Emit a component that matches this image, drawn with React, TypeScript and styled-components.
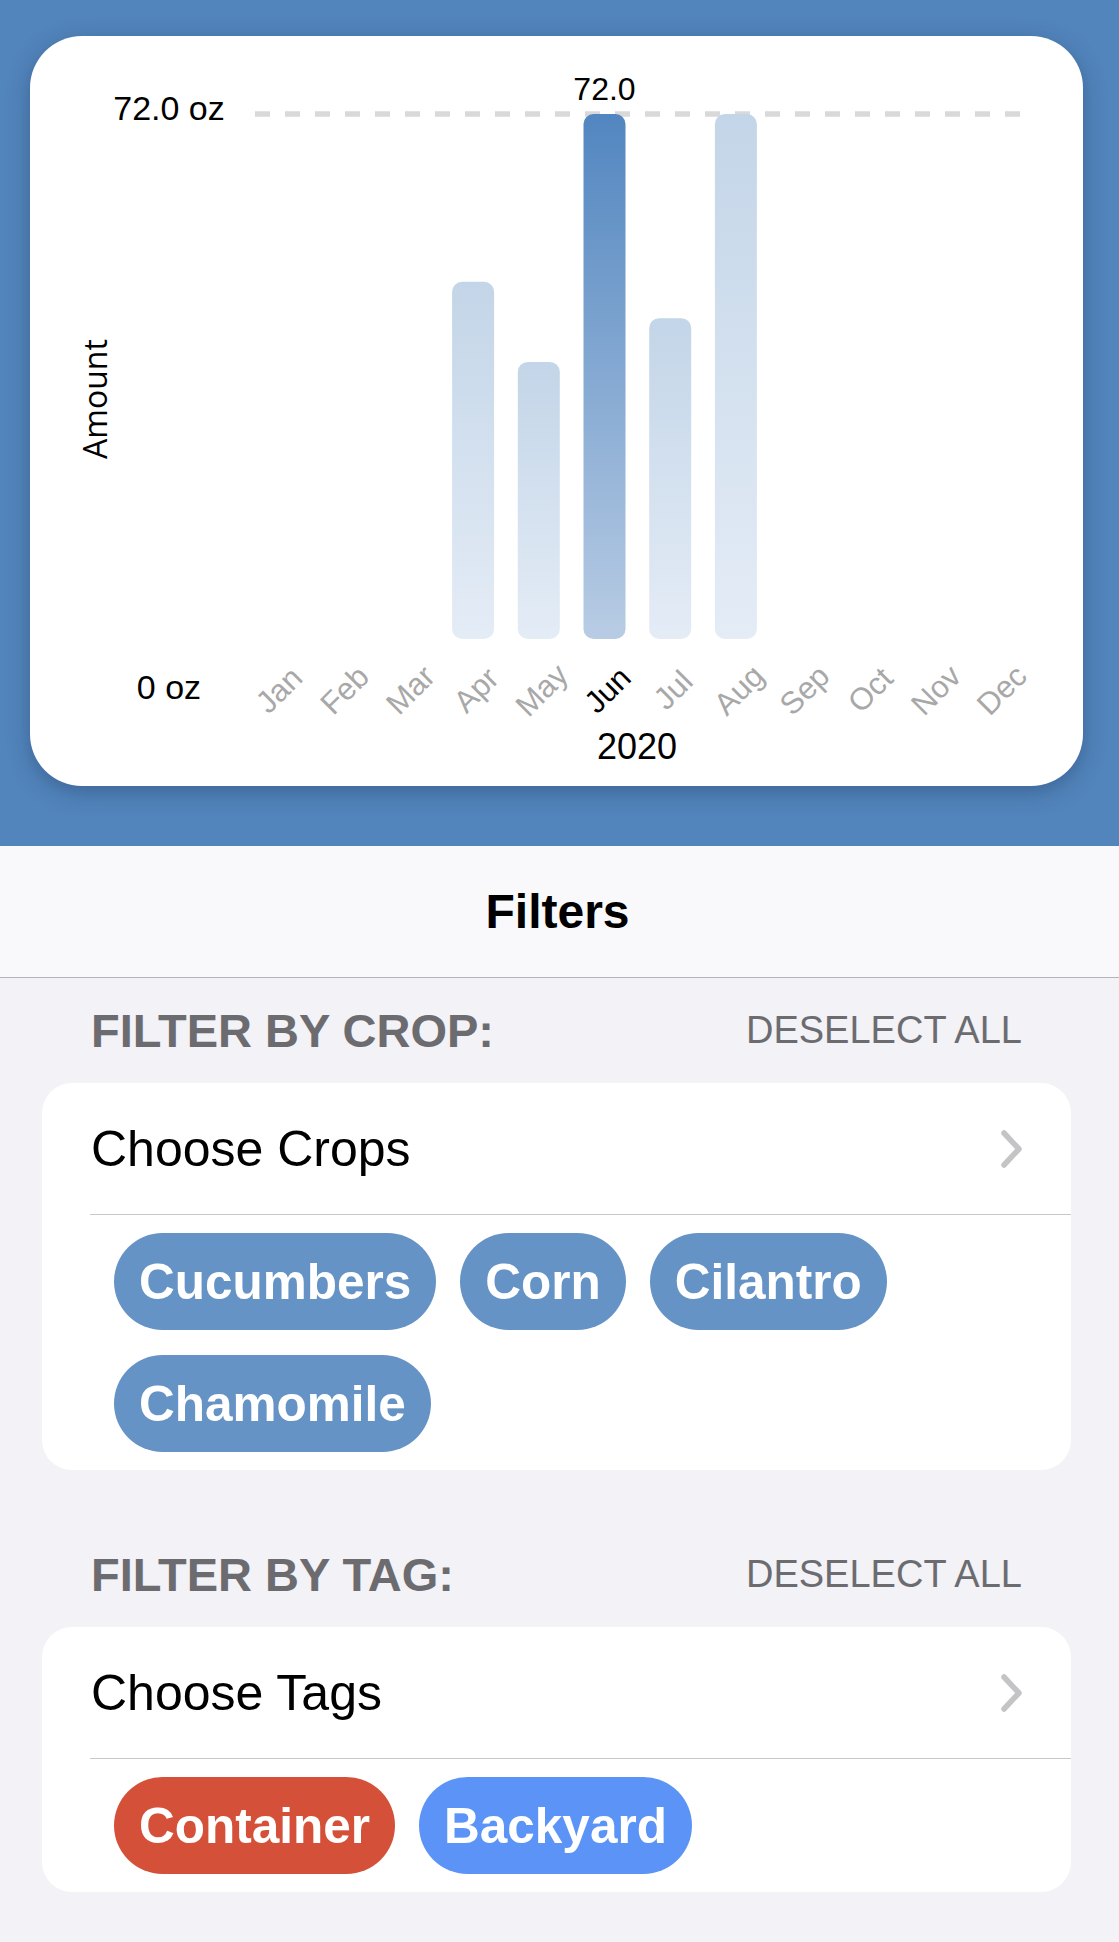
import React from "react";
import styled, { createGlobalStyle } from "styled-components";

const GlobalStyle = createGlobalStyle`
  html, body {
    margin: 0;
    padding: 0;
    background: #f2f2f7;
  }
  body {
    font-family: "Liberation Sans", Arial, sans-serif;
    -webkit-font-smoothing: antialiased;
  }
`;

const Page = styled.div`
  width: 1119px;
  min-height: 1942px;
  display: flex;
  flex-direction: column;
  background: #f2f2f7;
`;

const ChartBand = styled.section`
  background: #5285bc;
  padding: 36px 36px 60px 30px;
`;

const ChartCard = styled.div`
  width: 1053px;
  height: 750px;
  background: #ffffff;
  border-radius: 52px;
  box-shadow: 0 6px 22px rgba(20, 40, 80, 0.35);
  overflow: hidden;
`;

const ChartSvg = styled.svg`
  display: block;
  font-family: "Liberation Sans", Arial, sans-serif;
`;

const SheetHeader = styled.header`
  height: 131px;
  background: #f9f9fb;
  border-bottom: 1px solid #b5b5b8;
  display: flex;
  align-items: center;
  justify-content: center;
`;

const SheetTitle = styled.h1`
  margin: 0 4px 0 0;
  font-size: 48px;
  font-weight: 700;
  color: #000;
`;

const Sections = styled.div`
  display: flex;
  flex-direction: column;
  gap: 52px;
  padding: 0 48px 0 42px;
`;

const Section = styled.section`
  display: flex;
  flex-direction: column;
`;

const SectionHeader = styled.div`
  height: 105px;
  display: flex;
  align-items: center;
  justify-content: space-between;
  padding: 0 49px 0 49px;
`;

const SectionTitle = styled.h2`
  margin: 0;
  font-size: 47px;
  font-weight: 700;
  color: #6c6c70;
  text-transform: uppercase;
`;

const DeselectButton = styled.button`
  border: none;
  background: none;
  padding: 0;
  font-family: inherit;
  font-size: 38px;
  font-weight: 400;
  color: #6c6c70;
  text-transform: uppercase;
`;

const Card = styled.div`
  background: #ffffff;
  border-radius: 30px;
  overflow: hidden;
`;

const ChooseRow = styled.div`
  height: 131px;
  display: flex;
  align-items: center;
  justify-content: space-between;
  padding: 0 48px 0 49px;
`;

const ChooseLabel = styled.span`
  font-size: 50px;
  color: #000;
`;

const Divider = styled.div`
  height: 1px;
  margin-left: 48px;
  background: #c8c8cc;
`;

const ChipWrap = styled.div`
  display: flex;
  flex-wrap: wrap;
  gap: 25px 24px;
  padding: 18px 48px 18px 72px;
`;

const Chip = styled.span<{ $bg: string }>`
  height: 97px;
  padding: 0 25px;
  border-radius: 49px;
  background: ${(p) => p.$bg};
  color: #ffffff;
  font-size: 49.5px;
  font-weight: 700;
  display: inline-flex;
  align-items: center;
  box-sizing: border-box;
`;

const Chevron = () => (
  <svg width="22" height="38" viewBox="0 0 22 38">
    <polyline
      points="3,3 18,19 3,35"
      fill="none"
      stroke="#c4c4c7"
      strokeWidth="5.5"
      strokeLinecap="round"
      strokeLinejoin="round"
    />
  </svg>
);

const MONTHS = ["Jan", "Feb", "Mar", "Apr", "May", "Jun", "Jul", "Aug", "Sep", "Oct", "Nov", "Dec"];
const VALUES = [0, 0, 0, 49, 38, 72, 44, 72, 0, 0, 0, 0];
const SELECTED = 5;
const BASE_Y = 603;
const MAX_H = 525;
const slotX = (i: number) => 246 + 65.7 * i;

const Chart = () => (
  <ChartSvg width="1053" height="750" viewBox="0 0 1053 750">
    <defs>
      <linearGradient id="barSel" x1="0" y1="0" x2="0" y2="1">
        <stop offset="0" stopColor="#5286c0" />
        <stop offset="1" stopColor="#b8cce4" />
      </linearGradient>
      <linearGradient id="barDim" x1="0" y1="0" x2="0" y2="1">
        <stop offset="0" stopColor="#c3d5e8" />
        <stop offset="1" stopColor="#e4ecf6" />
      </linearGradient>
    </defs>

    <text x="139" y="84" fontSize="34" textAnchor="middle" fill="#000">72.0 oz</text>
    <text x="139" y="663" fontSize="34" textAnchor="middle" fill="#000">0 oz</text>
    <text
      x="64"
      y="363"
      fontSize="32"
      textAnchor="middle"
      dominantBaseline="central"
      fill="#000"
      fontFamily="'Open Sans', sans-serif"
      transform="rotate(-90 64 363)"
    >
      Amount
    </text>

    <line x1="225" y1="78" x2="991" y2="78" stroke="#d9d9d9" strokeWidth="5.5" strokeDasharray="15 15" />

    {VALUES.map((v, i) => {
      if (!v) return null;
      const h = (v / 72) * MAX_H;
      return (
        <rect
          key={i}
          x={slotX(i) - 21}
          y={BASE_Y - h}
          width="42"
          height={h}
          rx="10"
          fill={i === SELECTED ? "url(#barSel)" : "url(#barDim)"}
        />
      );
    })}

    <text x={slotX(SELECTED)} y="64" fontSize="32" textAnchor="middle" fill="#000">72.0</text>

    {MONTHS.map((m, i) => {
      const cx = slotX(i) + 3;
      const cy = 654;
      return (
        <text
          key={m}
          x={cx}
          y={cy}
          fontSize="31"
          textAnchor="middle"
          dominantBaseline="central"
          fill={i === SELECTED ? "#000" : "#a8a8a8"}
          transform={`rotate(-45 ${cx} ${cy})`}
        >
          {m}
        </text>
      );
    })}

    <text x="607" y="723" fontSize="36" textAnchor="middle" fill="#000">2020</text>
  </ChartSvg>
);

type FilterProps = {
  title: string;
  choose: string;
  chips: { label: string; color: string }[];
};

const FilterSection = ({ title, choose, chips }: FilterProps) => (
  <Section>
    <SectionHeader>
      <SectionTitle>{title}</SectionTitle>
      <DeselectButton>Deselect All</DeselectButton>
    </SectionHeader>
    <Card>
      <ChooseRow>
        <ChooseLabel>{choose}</ChooseLabel>
        <Chevron />
      </ChooseRow>
      <Divider />
      <ChipWrap>
        {chips.map((c) => (
          <Chip key={c.label} $bg={c.color}>
            {c.label}
          </Chip>
        ))}
      </ChipWrap>
    </Card>
  </Section>
);

const CROP = "#6593c5";

export default function App() {
  return (
    <>
      <GlobalStyle />
      <Page>
        <ChartBand>
          <ChartCard>
            <Chart />
          </ChartCard>
        </ChartBand>
        <SheetHeader>
          <SheetTitle>Filters</SheetTitle>
        </SheetHeader>
        <Sections>
          <FilterSection
            title="Filter by crop:"
            choose="Choose Crops"
            chips={[
              { label: "Cucumbers", color: CROP },
              { label: "Corn", color: CROP },
              { label: "Cilantro", color: CROP },
              { label: "Chamomile", color: CROP },
            ]}
          />
          <FilterSection
            title="Filter by tag:"
            choose="Choose Tags"
            chips={[
              { label: "Container", color: "#d55039" },
              { label: "Backyard", color: "#5b94f6" },
            ]}
          />
        </Sections>
      </Page>
    </>
  );
}
